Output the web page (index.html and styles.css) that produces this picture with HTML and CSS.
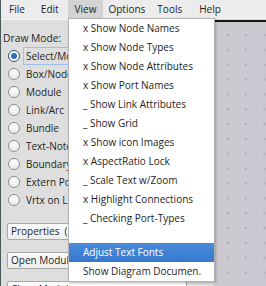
FILE: index.html
```html
<!DOCTYPE html>
<html>
<head>
<meta charset="utf-8">
<link rel="stylesheet" href="styles.css">
</head>
<body>
<div class="window">
  <div class="menubar">
    <span class="mb-item mb-file">File</span>
    <span class="mb-item mb-edit">Edit</span>
    <span class="mb-item mb-view active">View</span>
    <span class="mb-item mb-options">Options</span>
    <span class="mb-item mb-tools">Tools</span>
    <span class="mb-item mb-help">Help</span>
  </div>
  <div class="main">
    <div class="sidebar">
      <div class="title">Draw Mode:</div>
      <div class="radios">
        <div class="radio checked"><span class="dot"></span><span class="lbl focus">Select/Move</span></div>
        <div class="radio"><span class="dot"></span><span class="lbl">Box/Node</span></div>
        <div class="radio"><span class="dot"></span><span class="lbl">Module</span></div>
        <div class="radio"><span class="dot"></span><span class="lbl">Link/Arc</span></div>
        <div class="radio"><span class="dot"></span><span class="lbl">Bundle</span></div>
        <div class="radio"><span class="dot"></span><span class="lbl">Text-Note</span></div>
        <div class="radio"><span class="dot"></span><span class="lbl">Boundary</span></div>
        <div class="radio"><span class="dot"></span><span class="lbl">Extern Port</span></div>
        <div class="radio"><span class="dot"></span><span class="lbl">Vrtx on Link</span></div>
      </div>
      <div class="buttons">
        <div class="btn">Properties&nbsp;&nbsp;(Node)</div>
        <div class="btn">Open Module</div>
        <div class="btn">Close Module</div>
      </div>
    </div>
    <div class="canvas">
      <svg class="grid" width="52" height="266" xmlns="http://www.w3.org/2000/svg">
        <defs>
          <pattern id="dots" x="13" y="12" width="18.33" height="14.85" patternUnits="userSpaceOnUse">
            <rect x="0" y="0" width="1" height="2" fill="#948cb6"/>
          </pattern>
        </defs>
        <rect width="52" height="266" fill="url(#dots)"/>
      </svg>
    </div>
  </div>
  <div class="dropdown">
    <div class="mi">x Show Node Names</div>
    <div class="mi">x Show Node Types</div>
    <div class="mi">x Show Node Attributes</div>
    <div class="mi">x Show Port Names</div>
    <div class="mi">_ Show Link Attributes</div>
    <div class="mi">_ Show Grid</div>
    <div class="mi">x Show icon Images</div>
    <div class="mi">x AspectRatio Lock</div>
    <div class="mi">_ Scale Text w/Zoom</div>
    <div class="mi">x Highlight Connections</div>
    <div class="mi">_ Checking Port-Types</div>
    <div class="sep"></div>
    <div class="mi hl">Adjust Text Fonts</div>
    <div class="mi">Show Diagram Documen.</div>
  </div>
</div>
</body>
</html>
```
FILE: styles.css
```css
* { box-sizing: border-box; }
html, body { margin: 0; padding: 0; }
body {
  width: 266px;
  height: 286px;
  overflow: hidden;
  font-family: "Open Sans", "Noto Sans", sans-serif;
  font-size: 10px;
  color: #1e1e1e;
  background: #dedede;
}
.window {
  position: relative;
  width: 266px;
  height: 286px;
  border-left: 1px solid #4a5a58;
}
.menubar {
  height: 19px;
  background: #ececec;
  display: flex;
  align-items: stretch;
  padding-left: 1px;
}
.mb-item {
  display: flex;
  align-items: center;
  padding: 0 7px 2px 7px;
}
.mb-edit { margin-left: 2px; }
.mb-view { margin-left: 2px; }
.mb-options { margin-left: -2px; }
.mb-tools { margin-left: -2px; }
.mb-help { margin-left: 3px; }
.mb-item.active { background: #d3d3d3; }

.main {
  display: flex;
  height: 267px;
}
.sidebar {
  width: 213px;
  flex: none;
  background: #dedede;
  padding: 10px 0 0 2px;
  border-top: 1px solid #f4f4f4;
}
.title { height: 16px; line-height: 16px; font-size: 10.3px; }
.radios { display: flex; flex-direction: column; margin-top: 1px; }
.radio {
  height: 18px;
  display: flex;
  align-items: center;
  padding-left: 5px;
  font-size: 10px;
}
.dot {
  width: 12px;
  height: 12px;
  border-radius: 50%;
  border: 1px solid #8c8c8c;
  background: linear-gradient(#ffffff, #ececec);
  margin-right: 6px;
  flex: none;
  position: relative;
}
.radio.checked .dot {
  border-color: #2b4f7e;
  background: #fff;
}
.radio.checked .dot::after {
  content: "";
  position: absolute;
  left: 2px; top: 2px;
  width: 6px; height: 6px;
  border-radius: 50%;
  background: #2f6dc1;
}
.lbl { padding: 1px 2px; border: 1px solid transparent; margin-left: -3px; }
.lbl.focus { border-color: #9cc0ea; }
.buttons {
  display: flex;
  flex-direction: column;
  gap: 12px;
  margin-top: 14px;
  padding-left: 4px;
}
.btn {
  width: 180px;
  height: 17px;
  border: 1px solid #a8a8a8;
  border-radius: 2px;
  background: linear-gradient(#fbfbfb, #ededed);
  padding-left: 3px;
  line-height: 15px;
  font-size: 10px;
}
.canvas {
  flex: 1;
  background-color: #cbc8d0;
  border-top: 2px solid #141414;
  margin-top: 1px;
  overflow: hidden;
}
.grid { display: block; }
.dropdown {
  position: absolute;
  left: 67px;
  top: 18px;
  width: 147px;
  background: #ffffff;
  border: 1px solid #b4b4b4;
  box-shadow: 1px 1px 2px rgba(0,0,0,0.25);
}
.mi {
  height: 19px;
  line-height: 19px;
  padding-left: 14px;
  white-space: nowrap;
}
.sep { height: 15px; }
.mi.hl {
  background: linear-gradient(#4a8ad9, #3679cf);
  color: #ffffff;
}
```
